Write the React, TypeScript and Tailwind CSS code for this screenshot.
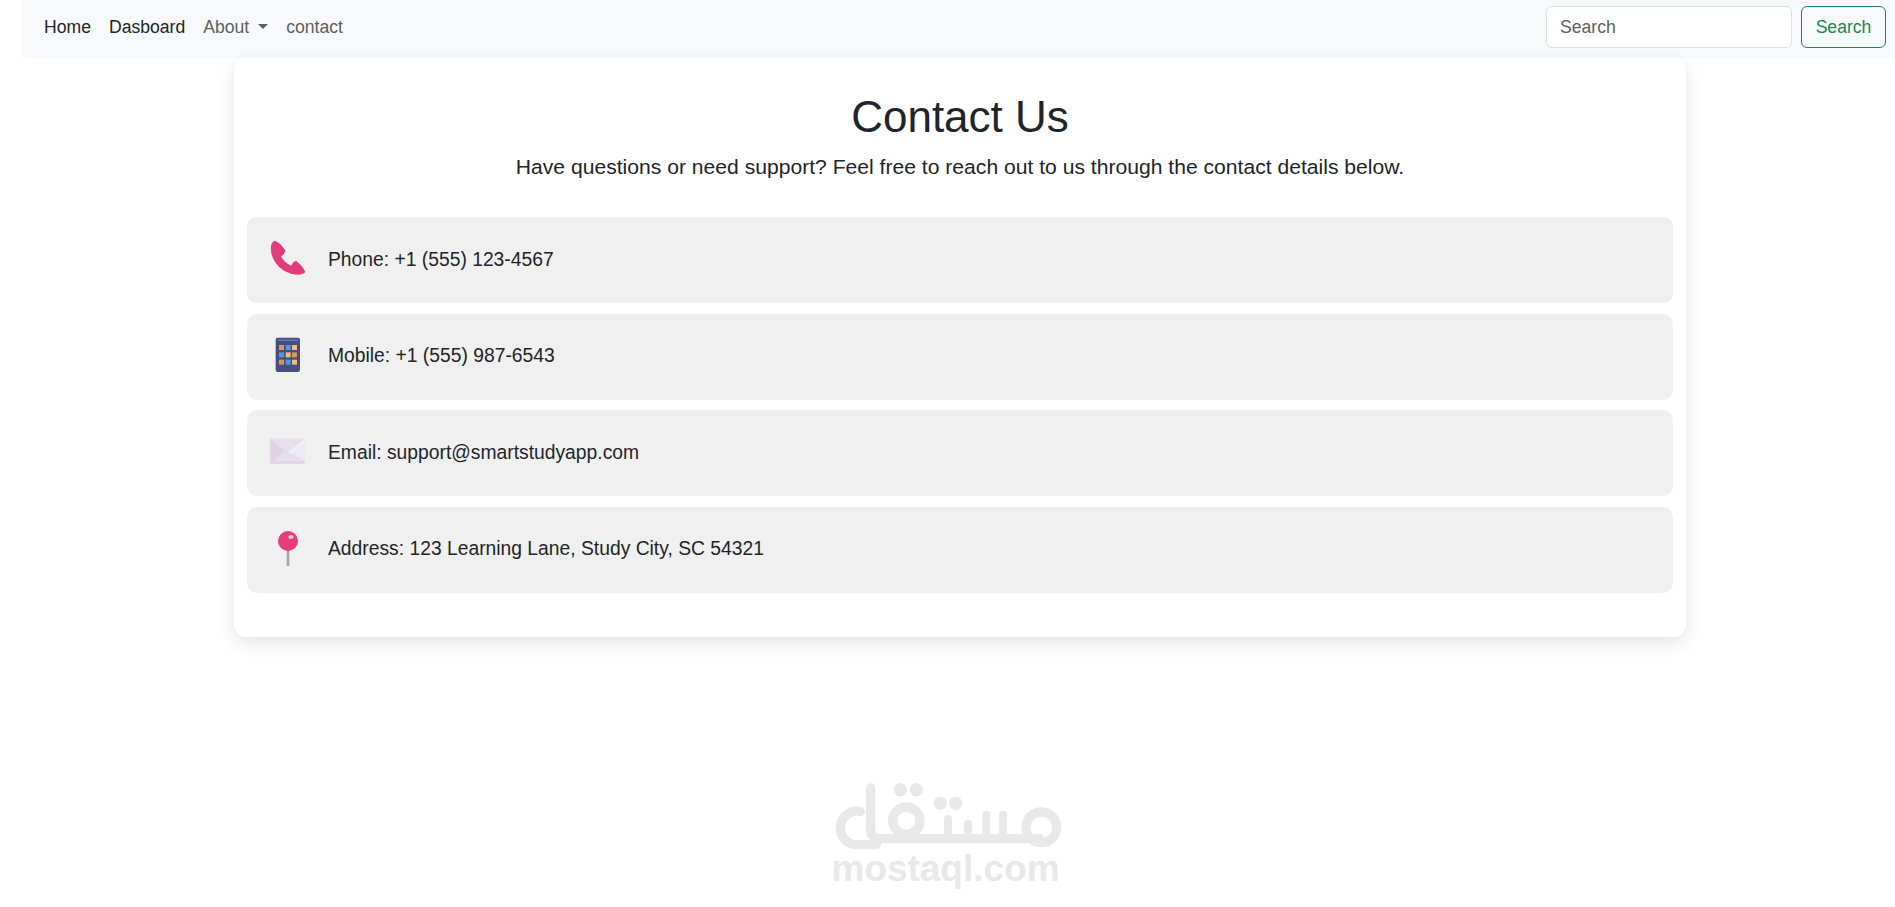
import React from "react";

const PhoneIcon = () => (
  <svg viewBox="83 76 120 120" className="w-10 h-10 shrink-0">
    <path d="M95 97 Q96 80 107 78 Q125 85 138 108 Q136 119 125 125 Q135 145 156 153 Q160 141 170 138 Q190 153 198 172 Q190 180 175 180 Q130 178 107 142 Q93 120 95 97 Z" fill="#e23d7a" />
  </svg>
);

const TabletIcon = () => (
  <svg viewBox="81 68 120 120" className="w-10 h-10 shrink-0">
    <rect x="107" y="70" width="73" height="103" rx="6" fill="#4b4b82" />
    <rect x="117" y="92" width="15" height="15" fill="#d99a55" />
    <rect x="137" y="92" width="15" height="15" fill="#4a9bdc" />
    <rect x="156" y="92" width="15" height="15" fill="#f2bd7c" />
    <rect x="117" y="114" width="15" height="15" fill="#4a9bdc" />
    <rect x="137" y="114" width="15" height="15" fill="#f2bd7c" />
    <rect x="156" y="114" width="15" height="15" fill="#d99a55" />
    <rect x="117" y="136" width="15" height="15" fill="#d99a55" />
    <rect x="137" y="136" width="15" height="15" fill="#4a9bdc" />
    <rect x="156" y="136" width="15" height="15" fill="#f2bd7c" />
    <rect x="112" y="76" width="62" height="3" fill="#4a9bdc" />
  </svg>
);

const MailIcon = () => (
  <svg viewBox="82 58 120 120" className="w-10 h-10 shrink-0">
    <rect x="92" y="75" width="103" height="75" fill="#e5dfec" />
    <path d="M92 75 V150 H195 V143 H104 L136 112 L92 75 Z" fill="#e2d2e3" />
    <path d="M92 75 H195 L146 116 Z" fill="#e6e0ec" />
    <path d="M195 75 L146 116 L153 120 L195 88 Z" fill="#f1f1f4" />
    <path d="M195 88 L153 118 L195 143 Z" fill="#ecebf1" />
  </svg>
);

const PinIcon = () => (
  <svg viewBox="81 62 120 120" className="w-10 h-10 shrink-0">
    <rect x="140" y="120" width="8" height="50" fill="#a3a5ab" />
    <circle cx="144" cy="95" r="30" fill="#e73c7c" />
    <ellipse cx="153" cy="83" rx="8" ry="6" fill="#f6c3d4" />
  </svg>
);

const MostaqlLogo = () => (
  <svg viewBox="0 0 735 270" className="w-[245px] h-[90px]" fill="none" stroke="#e9e9e9" strokeWidth="28" strokeLinecap="round" aria-label="mostaql logo">
    <path d="M112 112 A50 50 0 0 0 94 212 H160" />
    <path d="M143 42 V165 Q143 198 180 194 H650" />
    <circle cx="250" cy="140" r="41" />
    <path d="M375 190 V135 M435 190 V150 M490 190 V122 M540 190 V122" strokeWidth="24" />
    <circle cx="655" cy="160" r="46" />
    <g fill="#e9e9e9" stroke="none">
      <circle cx="232" cy="47" r="20" />
      <circle cx="280" cy="47" r="20" />
      <circle cx="352" cy="88" r="20" />
      <circle cx="398" cy="88" r="20" />
    </g>
  </svg>
);

const rows = [
  { Icon: PhoneIcon, text: "Phone: +1 (555) 123-4567" },
  { Icon: TabletIcon, text: "Mobile: +1 (555) 987-6543" },
  { Icon: MailIcon, text: "Email: support@smartstudyapp.com" },
  { Icon: PinIcon, text: "Address: 123 Learning Lane, Study City, SC 54321" },
];

export default function App() {
  return (
    <div className="relative min-h-[907px] bg-white font-['Liberation_Sans',Arial,sans-serif] text-[#212529] overflow-hidden">
      <nav className="ml-[22px] h-[58px] bg-[#f8f9fa] flex items-center justify-between pl-[22px] pr-[9px] pb-[5px] pt-[1px]">
        <div className="flex items-center text-[17.6px]">
          <a className="mr-[18px]">Home</a>
          <a className="mr-[18px]">Dasboard</a>
          <a className="text-[#5c5f63] flex items-center mr-[18px]">
            About
            <span className="ml-[9px] w-0 h-0 border-x-[5px] border-x-transparent border-t-[5px] border-t-[#5c5f63]" />
          </a>
          <a className="text-[#5c5f63]">contact</a>
        </div>
        <div className="flex items-center gap-[9px]">
          <input
            placeholder="Search"
            className="w-[246px] h-[42px] rounded-md border border-[#dee2e6] bg-white px-[13px] text-[17.6px] placeholder:text-[#5c5f63] outline-none"
          />
          <button className="w-[85px] h-[42px] rounded-md border border-[#198754] text-[#198754] text-[17.6px]">Search</button>
        </div>
      </nav>
      <div className="pl-[25px]">
        <main className="mx-auto w-[1452px] h-[579px] bg-white rounded-xl shadow-[0_6px_18px_rgba(0,0,0,0.11)] px-[13px] pt-[33px]">
          <h1 className="text-center text-[44px] leading-[52px] font-normal">Contact Us</h1>
          <p className="text-center text-[21.12px] leading-[30px] mt-[9px]">
            Have questions or need support? Feel free to reach out to us through the contact details below.
          </p>
          <div className="mt-[35px] flex flex-col gap-[10.6px]">
            {rows.map(({ Icon, text }) => (
              <div key={text} className="h-[86px] rounded-[10px] bg-[#f0f0f0] flex items-center pl-[20px] gap-[21px] text-[19.3px]">
                <Icon />
                <span>{text}</span>
              </div>
            ))}
          </div>
        </main>
      </div>
      <div className="absolute left-[823px] top-[774px] w-[245px] flex flex-col items-center">
        <MostaqlLogo />
        <span className="text-[37px] leading-[40px] font-bold text-[#e9e9e9] -mt-[15px]">mostaql.com</span>
      </div>
    </div>
  );
}
